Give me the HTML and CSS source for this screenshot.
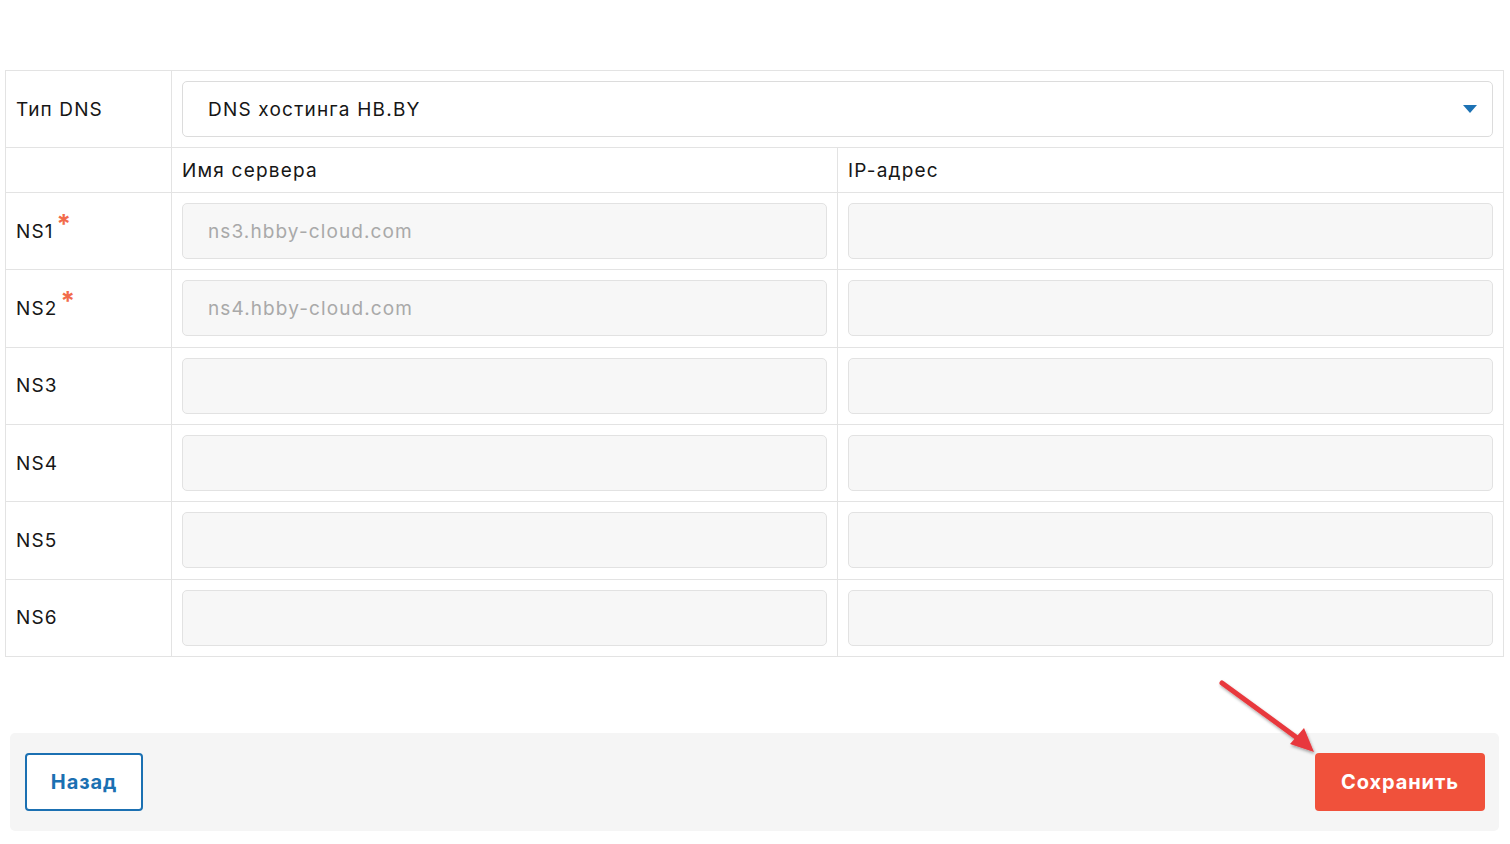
FILE: index.html
```html
<!DOCTYPE html>
<html lang="ru">
<head>
<meta charset="utf-8">
<link rel="stylesheet" href="styles.css">
</head>
<body>
<div class="page">
  <table class="dns">
    <colgroup><col class="c1"><col class="c2"><col class="c3"></colgroup>
    <tr class="row-type">
      <td class="label">Тип DNS</td>
      <td colspan="2">
        <div class="select">
          <span>DNS хостинга HB.BY</span>
          <svg class="caret" width="14" height="9" viewBox="0 0 14 9"><path d="M0 0H14L7 8Z" fill="#1d72b4"/></svg>
        </div>
      </td>
    </tr>
    <tr class="row-head">
      <td></td>
      <td class="head">Имя сервера</td>
      <td class="head">IP-адрес</td>
    </tr>
    <tr><td class="label">NS1<span class="req">*</span></td><td><div class="input ph">ns3.hbby-cloud.com</div></td><td><div class="input"></div></td></tr>
    <tr><td class="label">NS2<span class="req">*</span></td><td><div class="input ph">ns4.hbby-cloud.com</div></td><td><div class="input"></div></td></tr>
    <tr><td class="label">NS3</td><td><div class="input"></div></td><td><div class="input"></div></td></tr>
    <tr><td class="label">NS4</td><td><div class="input"></div></td><td><div class="input"></div></td></tr>
    <tr><td class="label">NS5</td><td><div class="input"></div></td><td><div class="input"></div></td></tr>
    <tr><td class="label">NS6</td><td><div class="input"></div></td><td><div class="input"></div></td></tr>
  </table>
  <div class="footer">
    <button class="btn back">Назад</button>
    <button class="btn save">Сохранить</button>
  </div>
  <svg class="arrow" width="120" height="90" viewBox="0 0 120 90">
    <defs>
      <filter id="sh" x="-20%" y="-20%" width="140%" height="140%">
        <feDropShadow dx="1" dy="2" stdDeviation="1.5" flood-color="#000" flood-opacity="0.35"/>
      </filter>
    </defs>
    <g filter="url(#sh)">
      <line x1="4" y1="5" x2="82" y2="62" stroke="#e8393e" stroke-width="5" stroke-linecap="round"/>
      <path d="M96 74 L72 66 L86 50 Z" fill="#e8393e"/>
    </g>
  </svg>
</div>
</body>
</html>
```
FILE: styles.css
```css
* { box-sizing: border-box; }
body {
  margin: 0;
  background: #fff;
  font-family: "Inter", "Noto Sans", sans-serif;
  color: #161616;
}
.page {
  position: relative;
  padding: 70px 6px 0 5px;
}
.dns {
  width: 100%;
  border-collapse: collapse;
  table-layout: fixed;
}
.c1 { width: 166px; }
.c2 { width: 666px; }
.dns td {
  border: 1px solid #e3e3e3;
  padding: 10px;
  vertical-align: middle;
}
.dns tr { height: 77.33px; }
.dns tr.row-type { height: 77px; }
.dns tr.row-head { height: 45px; }
.label {
  font-size: 19px;
  letter-spacing: 1.1px;
}
.req {
  color: #f26b4b;
  font-size: 26px;
  font-weight: 700;
  line-height: 0;
  position: relative;
  top: -5px;
  margin-left: 3px;
}
.head {
  font-size: 19px;
  letter-spacing: 1.2px;
}
.select {
  height: 56px;
  border: 1px solid #dcdcdc;
  border-radius: 5px;
  display: flex;
  align-items: center;
  justify-content: space-between;
  padding: 0 15px 0 25px;
  font-size: 19px;
  letter-spacing: 1.2px;
}
.input {
  height: 56px;
  border: 1px solid #e2e2e2;
  border-radius: 5px;
  background: #f7f7f7;
  display: flex;
  align-items: center;
  padding-left: 25px;
  font-size: 19px;
  letter-spacing: 1.1px;
}
.input.ph { color: #a9a9a9; }
.footer {
  margin: 76px 5px 0 5px;
  background: #f5f5f5;
  border-radius: 5px;
  padding: 20px 14px 20px 15px;
  display: flex;
  justify-content: space-between;
  align-items: center;
}
.btn {
  height: 58px;
  border-radius: 4px;
  font-family: inherit;
  font-size: 20px;
  font-weight: 700;
  letter-spacing: 0.9px;
  cursor: pointer;
}
.back {
  width: 118px;
  background: #fff;
  border: 2px solid #1b70b2;
  color: #1b70b2;
}
.save {
  width: 170px;
  background: #f0513b;
  border: none;
  color: #fff;
}
.arrow {
  position: absolute;
  left: 1218px;
  top: 678px;
}
```
